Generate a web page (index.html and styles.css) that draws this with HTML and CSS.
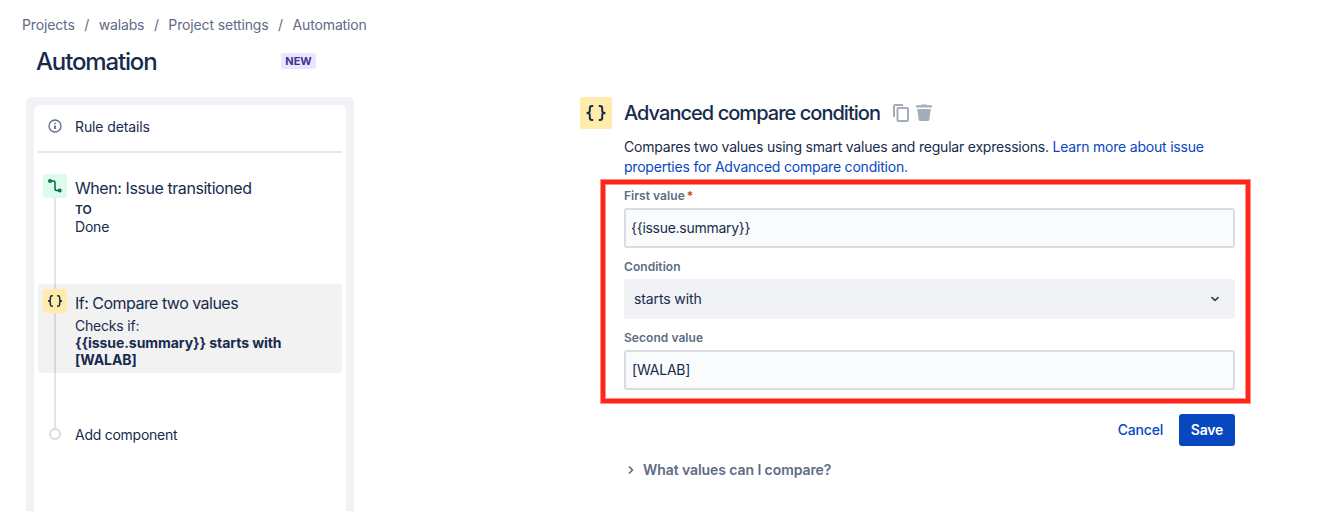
FILE: index.html
```html
<!DOCTYPE html>
<html lang="en">
<head>
<meta charset="utf-8">
<title>Automation</title>
<link rel="stylesheet" href="styles.css">
</head>
<body>
<div class="page">
  <aside class="sidebar">
    <nav class="breadcrumbs">
      <span class="crumb">Projects</span><span class="slash">/</span><span class="crumb">walabs</span><span class="slash">/</span><span class="crumb">Project settings</span><span class="slash">/</span><span class="crumb">Automation</span>
    </nav>
    <header class="heading">
      <h1 class="title">Automation</h1>
      <span class="badge">NEW</span>
    </header>
    <section class="panel">
      <div class="panel-body">
        <div class="rule-details">
          <svg class="info" width="14" height="14" viewBox="0 0 14 14" fill="none" stroke="#5e6c84"><circle cx="7" cy="7" r="6" stroke-width="1.3"/><path d="M7 6.4V10" stroke-width="1.8"/><path d="M7 3.7V5.2" stroke-width="1.6"/></svg>
          <span>Rule details</span>
        </div>
        <div class="timeline">
          <div class="step step-when">
            <div class="node node-green">
              <svg width="24" height="24" viewBox="0 0 24 24" fill="none" stroke="#006644" stroke-width="1.5"><circle cx="7" cy="7" r="1.2"/><circle cx="16.7" cy="16.5" r="1.2"/><path d="M8.3 7H10.5Q12 7 12 8.5V15Q12 16.5 13.5 16.5H15.4"/></svg>
            </div>
            <div>
              <div class="step-title when-title">When: Issue transitioned</div>
              <div class="to">TO</div>
              <div class="done">Done</div>
            </div>
          </div>
          <div class="step step-if">
            <div class="node node-yellow">
              <svg width="24" height="24" viewBox="0 0 32 32"><use href="#braces"/></svg>
            </div>
            <div>
              <div class="step-title if-title">If: Compare two values</div>
              <div class="checks">Checks if:</div>
              <div class="check-value">{{issue.summary}} starts with<br>[WALAB]</div>
            </div>
          </div>
          <div class="step step-add">
            <span class="dot"></span>
            <span class="add-label">Add component</span>
          </div>
        </div>
      </div>
    </section>
  </aside>

  <main class="editor">
    <div class="node node-large node-yellow">
      <svg width="32" height="32" viewBox="0 0 32 32"><g id="braces" fill="none" stroke="#172b4d" stroke-width="2"><path d="M13.2 9H12.1Q9.8 9 9.8 11.2V14Q9.8 16 6.6 16Q9.8 16 9.8 18V20.8Q9.8 23 12.1 23H13.2"/><path d="M18.8 9H19.9Q22.2 9 22.2 11.2V14Q22.2 16 25.4 16Q22.2 16 22.2 18V20.8Q22.2 23 19.9 23H18.8"/></g></svg>
    </div>
    <div class="content">
      <div class="editor-head">
        <h2 class="editor-title">Advanced compare condition</h2>
        <svg class="copy" width="16" height="18" viewBox="0 0 16 18" fill="none" stroke="#a5adba" stroke-width="2"><path d="M1 13V2Q1 1 2 1H10"/><rect x="4.5" y="4" width="10.5" height="13" rx="1"/></svg>
        <svg class="trash" width="16" height="18" viewBox="0 0 16 18" fill="#a5adba"><path d="M0 2.2Q0 1.3 1 1.3H5L5.6.5H10.4L11 1.3H15Q16 1.3 16 2.2V3.5H0Z"/><path d="M1.2 5H14.8L13.3 15.7Q13.1 17 11.8 17H4.2Q2.9 17 2.7 15.7Z"/></svg>
      </div>
      <p class="description">Compares two values using smart values and regular expressions. <a class="link">Learn more about issue<br>properties for Advanced compare condition.</a></p>
      <div class="form">
        <div class="label">First value<span class="required">*</span></div>
        <div class="input input-first">{{issue.summary}}</div>
        <div class="label">Condition</div>
        <div class="select"><span>starts with</span>
          <svg width="10" height="8" viewBox="0 0 10 8" fill="none" stroke="#344563" stroke-width="1.8" stroke-linecap="round" stroke-linejoin="round"><path d="M2 2.6L5 5.3L8 2.6"/></svg>
        </div>
        <div class="label">Second value</div>
        <div class="input input-second">[WALAB]</div>
      </div>
      <div class="actions">
        <span class="cancel">Cancel</span>
        <span class="save">Save</span>
      </div>
      <div class="help">
        <svg width="8" height="10" viewBox="0 0 8 10" fill="none" stroke="#5e6c84" stroke-width="1.7" stroke-linecap="round" stroke-linejoin="round"><path d="M2.5 2L5.5 5L2.5 8"/></svg>
        <span>What values can I compare?</span>
      </div>
    </div>
  </main>
</div>
</body>
</html>
```
FILE: styles.css
```css
* { box-sizing: border-box; }
body {
  margin: 0;
  background: #fff;
  color: #172b4d;
  font: 400 14px/20px Inter, "Liberation Sans", sans-serif;
  letter-spacing: -0.2px;
  overflow: hidden;
}
.page { display: flex; height: 511px; white-space: nowrap; }
.sidebar { display: flex; flex-direction: column; width: 580px; padding-top: 15px; }
.breadcrumbs { display: flex; padding-left: 22px; color: #5e6c84; letter-spacing: -0.14px; }
.slash { width: 24px; text-align: center; }
.heading { display: flex; align-items: center; padding: 11px 0 0 36px; height: 42px; }
.title { margin: 0; width: 245px; font-size: 24px; line-height: 28px; font-weight: 550; letter-spacing: -1.15px; }
.badge {
  width: 35px; height: 16px; margin-top: -2px; border-radius: 3px; background: #eae6ff; color: #403294;
  font-size: 11px; line-height: 16px; font-weight: 700; letter-spacing: 0; text-align: center;
}
.panel {
  flex: 1; width: 328px; margin: 20px 0 0 26px; padding: 8px 8px 0;
  border-radius: 6px 6px 0 0; background: #f1f2f6;
}
.panel-body { height: 100%; padding: 0 4px; border-radius: 6px 6px 0 0; background: #fff; }
.rule-details { display: flex; align-items: center; gap: 13px; height: 48px; padding: 0 0 2px 10px; border-bottom: 2px solid #e6e7ed; letter-spacing: -0.12px; }
.info { margin-top: -2px; }
.timeline { padding-top: 21px; background: linear-gradient(#e3e4ea, #e3e4ea) 16px 45px / 2px 230px no-repeat; }
.step { display: flex; gap: 8px; padding-left: 5px; }
.step-when { height: 110px; }
.step-if { height: 89px; padding-top: 5px; border-radius: 4px; background: rgba(0, 0, 0, 0.05); }
.node { flex: none; width: 24px; height: 24px; border-radius: 3px; }
.node svg { display: block; }
.node-green { background: #dbfbec; }
.node-yellow { background: #ffebac; }
.step-title { padding-top: 4px; font-size: 16px; line-height: 20px; }
.when-title { letter-spacing: -0.43px; }
.if-title { letter-spacing: -0.52px; }
.to { margin-top: 4px; font-size: 12px; line-height: 16px; font-weight: 600; letter-spacing: 0; }
.done { line-height: 17px; }
.checks { margin-top: 4px; line-height: 17px; }
.check-value { line-height: 17px; font-weight: 700; letter-spacing: -0.06px; }
.step-add { align-items: center; gap: 14px; margin-top: 52px; padding-left: 11px; height: 20px; letter-spacing: -0.26px; }
.dot { width: 12px; height: 12px; margin-top: -2px; border: 2px solid #d8dbe1; border-radius: 50%; background: #fff; }
.editor { display: flex; gap: 12px; padding-top: 97px; }
.node-large { width: 32px; height: 32px; }
.content { width: 611px; }
.editor-head { display: flex; align-items: center; height: 32px; }
.editor-title { margin: 0; width: 269px; font-size: 20px; line-height: 24px; font-weight: 550; letter-spacing: -0.96px; }
.trash { margin-left: 7px; }
.description { margin: 8px 0 0; letter-spacing: -0.21px; }
.link { color: #0747c0; }
.form { position: relative; padding-top: 11px; }
.form::after {
  content: ""; position: absolute; inset: 3px -15px -13px -23px;
  border: 4px solid #ff2519; box-shadow: 0 0 0 1px #ff8f88, inset 0 0 0 1px #ff8f88; pointer-events: none;
}
.label { height: 16px; margin-bottom: 4px; font-size: 12px; line-height: 16px; font-weight: 600; color: #5e6c84; letter-spacing: 0.05px; }
.required { margin-left: 2px; color: #de350b; }
.input, .select { height: 40px; margin-bottom: 11px; border-radius: 3px; }
.input { padding: 0 6px; border: 2px solid #d9dce1; background: #fafbfc; line-height: 36px; }
.input-first { padding-left: 5px; letter-spacing: -0.28px; }
.select { display: flex; align-items: center; justify-content: space-between; padding: 0 15px 0 10px; background: #f1f2f6; letter-spacing: -0.12px; }
.input-second { margin-bottom: 0; }
.actions { display: flex; justify-content: flex-end; gap: 16px; margin-top: 24px; line-height: 32px; font-weight: 550; }
.cancel { color: #0747c0; }
.save { width: 56px; border-radius: 3px; background: #0747c0; color: #fff; text-align: center; font-weight: 600; }
.help { display: flex; align-items: center; gap: 8px; margin-top: 14px; padding-left: 3px; color: #5e6c84; font-weight: 600; letter-spacing: -0.08px; }
```
